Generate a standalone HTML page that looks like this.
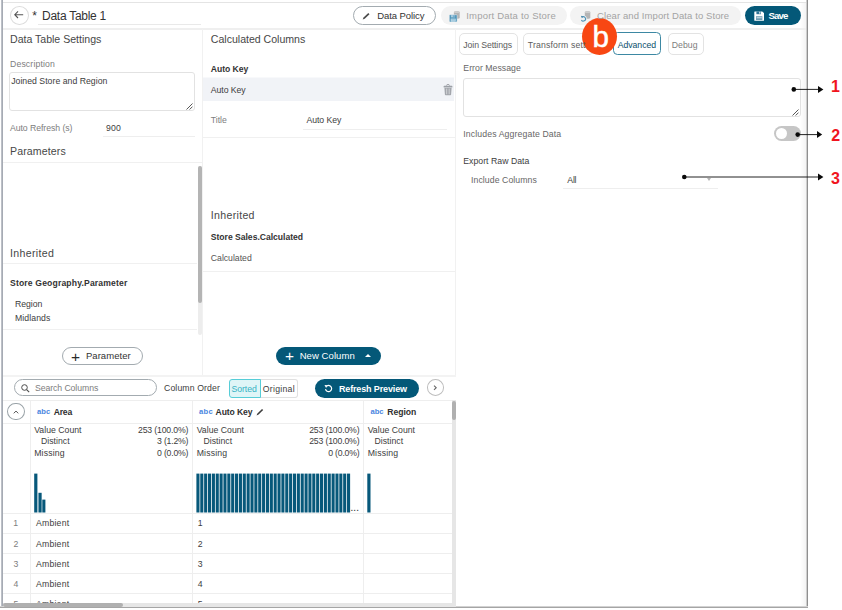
<!DOCTYPE html>
<html>
<head>
<meta charset="utf-8">
<title>Data Table 1</title>
<style>
html,body{margin:0;padding:0;background:#fff;}
body{width:842px;height:610px;position:relative;overflow:hidden;font-family:"Liberation Sans",sans-serif;color:#3c3c3c;}
.a{position:absolute;}
.t{position:absolute;white-space:nowrap;line-height:14px;height:14px;font-size:9px;color:#444;}
.ln{position:absolute;background:#eeeeee;}
.pill{position:absolute;border-radius:12px;box-sizing:border-box;}
.bx{position:absolute;box-sizing:border-box;border:1px solid #e3e3e3;border-radius:5px;background:#fff;}
</style>
</head>
<body>
<!-- outer frame -->
<div class="a" style="left:3px;top:2px;width:804px;height:1px;background:#e4e4e4;"></div>
<div class="a" style="left:1px;top:0;width:1px;height:608px;background:#bcc0c7;"></div><div class="a" style="left:2px;top:0;width:1px;height:608px;background:#a6abb4;"></div>
<div class="a" style="left:800px;top:3px;width:6px;height:603px;background:linear-gradient(90deg,#ffffff,#f3f3f3);"></div><div class="a" style="left:806px;top:0;width:1px;height:608px;background:#cdcdcd;"></div><div class="a" style="left:807px;top:0;width:1px;height:608px;background:#8e8e8e;"></div>
<div class="a" style="left:0;top:606px;width:808px;height:1px;background:#d2d2d2;"></div><div class="a" style="left:0;top:607px;width:808px;height:1px;background:#a5a5a5;"></div>

<!-- header -->
<div class="a" style="left:10px;top:5.8px;width:18.6px;height:18.8px;border:1px solid #dcdcdc;border-radius:50%;box-sizing:border-box;"></div>
<svg class="a" style="left:13px;top:9px;" width="12" height="12" viewBox="0 0 12 12"><path d="M10.2 5.7H2.2M5 2.4L1.8 5.7 5 9" fill="none" stroke="#555" stroke-width="1.1"/></svg>
<div class="ln" style="left:38px;top:24px;width:163px;height:1px;background:#e9e9e9;"></div>
<div class="ln" style="left:3px;top:28px;width:803px;height:2px;background:#efefef;"></div>

<div class="pill" style="left:353px;top:6px;width:83px;height:19px;border:1.3px solid #a3abb0;background:#fff;"></div>
<svg class="a" style="left:362px;top:12px;" width="9" height="8" viewBox="0 0 9 8"><path d="M0.7 7.5l0.8-2L6.3 1.1l1.2 1.2L2.7 6.7z" fill="#4a4a4a"/></svg>

<div class="pill" style="left:440.5px;top:6px;width:126px;height:19px;background:#f3f3f3;"></div>
<svg class="a" style="left:449px;top:11px;" width="11" height="11" viewBox="0 0 11 11">
 <path d="M4.9 1.1c0-1.1 5.8-1.1 5.8 0v5.8c0 1.1-5.8 1.1-5.8 0z" fill="#b4b4b4"/><ellipse cx="7.8" cy="1.2" rx="2.9" ry="0.9" fill="#cdcdcd"/>
 <rect x="0.3" y="3.7" width="7.8" height="7.3" rx="0.9" fill="#4c93b8" stroke="#f3f3f3" stroke-width="0.5"/><rect x="1.9" y="4.1" width="4.2" height="2.3" fill="#a8cde0"/><rect x="4.5" y="4.4" width="1" height="1.6" fill="#4c93b8"/><rect x="1.7" y="7.6" width="5" height="3.1" fill="#c5dfeb"/><rect x="2.3" y="8.6" width="3.8" height="0.7" fill="#6aa6c6"/>
</svg>

<div class="pill" style="left:570px;top:6px;width:171px;height:19px;background:#f3f3f3;"></div>
<svg class="a" style="left:580px;top:11px;" width="11" height="11" viewBox="0 0 11 11">
 <path d="M4.8 1.1c0-1.1 5.5-1.1 5.5 0v5.8c0 1.1-5.5 1.1-5.5 0z" fill="#b4b4b4"/><ellipse cx="7.55" cy="1.2" rx="2.75" ry="0.9" fill="#cdcdcd"/>
 <circle cx="3.4" cy="7.8" r="3.3" fill="#f1f1f1"/>
 <path d="M2.4 5.9A2.2 2.2 0 1 1 1.4 8.9" fill="none" stroke="#4c93b8" stroke-width="1.1"/><path d="M0.9 4.7l2.5 0.7-1.5 1.8z" fill="#3b7fa4"/>
</svg>

<div class="pill" style="left:745px;top:5.5px;width:56px;height:19.5px;background:#045878;"></div>
<svg class="a" style="left:753.5px;top:10.5px;" width="10.5" height="10" viewBox="0 0 10.5 10">
 <path d="M0.8 0.4h7.4l1.9 1.7v7.1a0.5 0.5 0 0 1-0.5 0.5H0.8a0.5 0.5 0 0 1-0.5-0.5V0.9a0.5 0.5 0 0 1 0.5-0.5z" fill="#fff"/>
 <rect x="2.4" y="0.4" width="4.6" height="2.8" fill="#2d7396"/><rect x="5.3" y="0.8" width="1.1" height="1.9" fill="#fff"/>
 <rect x="2" y="5.2" width="6.4" height="3.8" fill="#6f9db3"/><rect x="2.6" y="6.4" width="5.2" height="0.8" fill="#eaf2f6"/>
</svg>

<!-- left panel -->
<div class="a" style="left:9px;top:72px;width:186px;height:39px;border:1px solid #e2e2e2;border-radius:3px;box-sizing:border-box;"></div>
<svg class="a" style="left:186px;top:103px;" width="7" height="7" viewBox="0 0 7 7"><path d="M0.5 6.5L6.5 0.5M3.6 6.5L6.5 3.6" stroke="#444" stroke-width="0.9" fill="none"/></svg>
<div class="ln" style="left:103px;top:136px;width:92px;height:1px;"></div>
<div class="ln" style="left:3px;top:162px;width:199px;height:1px;background:#f0f0f0;"></div>
<div class="ln" style="left:3px;top:263px;width:194px;height:1px;background:#f0f0f0;"></div>
<div class="ln" style="left:3px;top:329px;width:194px;height:1px;background:#f0f0f0;"></div>
<div class="a" style="left:197.5px;top:166px;width:4.5px;height:169px;background:#ededed;border-radius:3px;"></div>
<div class="a" style="left:197.5px;top:166px;width:4.5px;height:136.5px;background:#b4b4b4;border-radius:3px;"></div>
<div class="pill" style="left:62px;top:347px;width:81px;height:17.6px;border:1.3px solid #a3abb0;background:#fff;"></div>
<div class="ln" style="left:202px;top:29px;width:1px;height:347px;background:#f1f1f1;"></div>

<!-- middle panel -->
<div class="a" style="left:203px;top:77px;width:251px;height:1px;background:#f8f9fb;"></div><div class="a" style="left:203px;top:78px;width:251px;height:23px;background:#f1f3f7;"></div>
<svg class="a" style="left:443px;top:84px;" width="10" height="12" viewBox="0 0 10 12">
 <path d="M3.4 1.6c0-1.6 3.2-1.6 3.2 0" fill="none" stroke="#a3a6ac" stroke-width="1"/>
 <rect x="0.6" y="1.8" width="8.8" height="1.7" rx="0.6" fill="#9ca0a6"/>
 <path d="M1.4 3.9h7.2l-0.5 6.6a0.8 0.8 0 0 1-0.8 0.7H2.7a0.8 0.8 0 0 1-0.8-0.7z" fill="#a3a6ac"/>
 <rect x="3" y="4.6" width="1.2" height="5.6" fill="#c9cbcf"/><rect x="5.6" y="4.6" width="1.2" height="5.6" fill="#c9cbcf"/>
</svg>
<div class="ln" style="left:302.5px;top:128.5px;width:144px;height:1px;"></div>
<div class="ln" style="left:203px;top:137px;width:252px;height:1px;background:#f0f0f0;"></div>
<div class="ln" style="left:203px;top:271px;width:252px;height:1px;background:#f0f0f0;"></div>
<div class="pill" style="left:275.5px;top:347px;width:105.5px;height:17.5px;background:#045878;"></div>
<div class="a" style="left:365px;top:354.3px;width:0;height:0;border-left:3px solid transparent;border-right:3px solid transparent;border-bottom:3.6px solid #fff;"></div>
<div class="ln" style="left:455px;top:29px;width:1px;height:347px;background:#f1f1f1;"></div>

<!-- right panel -->
<div class="bx" style="left:459px;top:32.5px;width:58.5px;height:22.5px;"></div>
<div class="bx" style="left:523px;top:32.5px;width:71px;height:22.5px;"></div>
<div class="bx" style="left:612.5px;top:32px;width:48.5px;height:23.4px;border:1.3px solid #3d88a3;border-radius:4.5px;"></div>
<div class="bx" style="left:667.5px;top:32.5px;width:36px;height:22.5px;"></div>
<div class="a" style="left:582.2px;top:17.6px;width:35px;height:37px;border-radius:50%;background:#f84713;"></div>
<div class="t" style="left:592.6px;top:21.1px;font-size:29.6px;line-height:32px;height:32px;color:#fff;-webkit-text-stroke:0.5px #fff;">b</div>

<div class="a" style="left:463px;top:78px;width:338px;height:38.5px;border:1px solid #e2e2e2;border-radius:3px;box-sizing:border-box;"></div>
<svg class="a" style="left:792px;top:108.5px;" width="7" height="7" viewBox="0 0 7 7"><path d="M0.5 6.5L6.5 0.5M3.6 6.5L6.5 3.6" stroke="#444" stroke-width="0.9" fill="none"/></svg>
<div class="a" style="left:774px;top:125.5px;width:26.5px;height:15.4px;border-radius:8px;background:#c6c6c6;"></div>
<div class="a" style="left:775.7px;top:127.5px;width:11.4px;height:11.4px;border-radius:6px;background:#fff;"></div>
<div class="ln" style="left:563px;top:188px;width:154.5px;height:1px;"></div>
<div class="a" style="left:707.2px;top:177.6px;width:0;height:0;border-left:2.7px solid transparent;border-right:2.7px solid transparent;border-top:3.2px solid #b5b5b5;"></div>

<!-- annotations -->
<svg class="a" style="left:670px;top:70px;" width="172" height="130" viewBox="0 0 172 130">
 <g stroke="#0a0a0a" stroke-width="0.9" fill="#0a0a0a">
  <circle cx="123.8" cy="19.4" r="2.3" stroke="none"/><line x1="123.8" y1="19.4" x2="149" y2="19.4"/><path d="M153.4 19.4l-5.4 -3.5v7z" stroke="none"/>
  <circle cx="127.7" cy="64.6" r="2.3" stroke="none"/><line x1="127.7" y1="64.6" x2="148" y2="64.6"/><path d="M152.2 64.6l-5.2 -3.5v7z" stroke="none"/>
  <circle cx="14.3" cy="107" r="2.3" stroke="none"/><line x1="14.3" y1="107" x2="149" y2="107"/><path d="M153.4 107l-5.4 -3.5v7z" stroke="none"/>
 </g>
 <g font-family="Liberation Sans, sans-serif" font-weight="bold" font-size="16" fill="#f0141e">
  <text x="161.1" y="21.9">1</text><text x="161.3" y="71.1">2</text><text x="161" y="114.2">3</text>
 </g>
</svg>

<!-- bottom panel -->
<div class="ln" style="left:3px;top:375px;width:453px;height:2px;background:#f3f3f3;"></div>
<div class="pill" style="left:14px;top:379px;width:142.5px;height:16.8px;border:1.3px solid #a3abb0;background:#fff;"></div>
<svg class="a" style="left:21px;top:384px;" width="9" height="9" viewBox="0 0 9 9"><circle cx="3.5" cy="3.5" r="2.8" fill="none" stroke="#4a4a4a" stroke-width="1"/><path d="M5.6 5.6L8.2 8.2" stroke="#4a4a4a" stroke-width="1.1"/></svg>
<div class="a" style="left:260px;top:378.5px;width:37.5px;height:19px;border:1px solid #e0e0e0;border-left:none;border-radius:0 3px 3px 0;box-sizing:border-box;"></div>
<div class="a" style="left:228.5px;top:378.5px;width:32px;height:19px;border:1.3px solid #57cdd7;background:#dff5f7;border-radius:3px 0 0 3px;box-sizing:border-box;"></div>
<div class="pill" style="left:314.5px;top:378.5px;width:104.8px;height:19px;background:#045878;"></div>
<svg class="a" style="left:323.8px;top:383.7px;" width="9" height="9" viewBox="0 0 9 9"><path d="M2.9 1.9A3.1 3.1 0 1 1 1.5 5.2" fill="none" stroke="#fff" stroke-width="1.2"/><path d="M0.5 1.1l3.2 0.2-1.6 2.6z" fill="#fff"/></svg>
<div class="a" style="left:426.7px;top:379.2px;width:16.9px;height:16.7px;border:1px solid #bdbdbd;border-radius:50%;box-sizing:border-box;"></div>
<svg class="a" style="left:432.3px;top:383.8px;" width="6" height="8" viewBox="0 0 6 8"><path d="M2 1.6L4.2 3.7 2 5.8" fill="none" stroke="#666" stroke-width="1.1"/></svg>

<!-- table -->
<div class="ln" style="left:3px;top:400px;width:449px;height:1px;"></div>
<div class="ln" style="left:3px;top:423px;width:449px;height:1px;"></div>
<div class="a" style="left:7.4px;top:402.9px;width:17.2px;height:17.5px;border:1px solid #9aa3a8;border-radius:50%;box-sizing:border-box;"></div>
<svg class="a" style="left:12px;top:408.5px;" width="8" height="6" viewBox="0 0 8 6"><path d="M1.7 4.3L4 2.1l2.3 2.2" fill="none" stroke="#5a5a5a" stroke-width="1"/></svg>
<div class="ln" style="left:29.5px;top:400px;width:1px;height:204px;"></div>
<div class="ln" style="left:192px;top:400px;width:1px;height:204px;"></div>
<div class="ln" style="left:363px;top:400px;width:1px;height:204px;"></div>
<svg class="a" style="left:256px;top:407.5px;" width="8" height="8" viewBox="0 0 8 8"><path d="M0.5 7.5l0.9-2.1L6 0.9l1.2 1.2L2.6 6.6z" fill="#3d3d3d"/></svg>

<!-- histograms -->
<svg class="a" style="left:0;top:470px;" width="460" height="45" viewBox="0 0 460 45"><g fill="#07587a"><rect x="34.20" y="3.60" width="3.20" height="38.90"/><rect x="38.45" y="22.80" width="3.20" height="19.70"/><rect x="42.30" y="29.60" width="3.10" height="12.90"/><rect x="196.40" y="3.60" width="3.09" height="38.90"/><rect x="200.26" y="3.60" width="3.09" height="38.90"/><rect x="204.12" y="3.60" width="3.09" height="38.90"/><rect x="207.99" y="3.60" width="3.09" height="38.90"/><rect x="211.85" y="3.60" width="3.09" height="38.90"/><rect x="215.71" y="3.60" width="3.09" height="38.90"/><rect x="219.57" y="3.60" width="3.09" height="38.90"/><rect x="223.43" y="3.60" width="3.09" height="38.90"/><rect x="227.30" y="3.60" width="3.09" height="38.90"/><rect x="231.16" y="3.60" width="3.09" height="38.90"/><rect x="235.02" y="3.60" width="3.09" height="38.90"/><rect x="238.88" y="3.60" width="3.09" height="38.90"/><rect x="242.74" y="3.60" width="3.09" height="38.90"/><rect x="246.61" y="3.60" width="3.09" height="38.90"/><rect x="250.47" y="3.60" width="3.09" height="38.90"/><rect x="254.33" y="3.60" width="3.09" height="38.90"/><rect x="258.19" y="3.60" width="3.09" height="38.90"/><rect x="262.05" y="3.60" width="3.09" height="38.90"/><rect x="265.92" y="3.60" width="3.09" height="38.90"/><rect x="269.78" y="3.60" width="3.09" height="38.90"/><rect x="273.64" y="3.60" width="3.09" height="38.90"/><rect x="277.50" y="3.60" width="3.09" height="38.90"/><rect x="281.36" y="3.60" width="3.09" height="38.90"/><rect x="285.23" y="3.60" width="3.09" height="38.90"/><rect x="289.09" y="3.60" width="3.09" height="38.90"/><rect x="292.95" y="3.60" width="3.09" height="38.90"/><rect x="296.81" y="3.60" width="3.09" height="38.90"/><rect x="300.67" y="3.60" width="3.09" height="38.90"/><rect x="304.54" y="3.60" width="3.09" height="38.90"/><rect x="308.40" y="3.60" width="3.09" height="38.90"/><rect x="312.26" y="3.60" width="3.09" height="38.90"/><rect x="316.12" y="3.60" width="3.09" height="38.90"/><rect x="319.98" y="3.60" width="3.09" height="38.90"/><rect x="323.85" y="3.60" width="3.09" height="38.90"/><rect x="327.71" y="3.60" width="3.09" height="38.90"/><rect x="331.57" y="3.60" width="3.09" height="38.90"/><rect x="335.43" y="3.60" width="3.09" height="38.90"/><rect x="339.29" y="3.60" width="3.09" height="38.90"/><rect x="343.16" y="3.60" width="3.09" height="38.90"/><rect x="347.02" y="3.60" width="3.09" height="38.90"/><rect x="367.30" y="3.60" width="3.20" height="38.90"/></g></svg>

<!-- rows -->
<div class="ln" style="left:3px;top:513px;width:449px;height:1px;"></div>
<div class="ln" style="left:3px;top:532.5px;width:449px;height:1px;"></div>
<div class="ln" style="left:3px;top:552.5px;width:449px;height:1px;"></div>
<div class="ln" style="left:3px;top:572.5px;width:449px;height:1px;"></div>
<div class="ln" style="left:3px;top:593px;width:449px;height:1px;"></div>
<div class="t" style="left:32.25px;top:8.84px;font-size:12.0px;color:#333;letter-spacing:0px;">*</div>
<div class="t" style="left:42.00px;top:8.64px;font-size:12.0px;color:#333;letter-spacing:-0.264px;">Data Table 1</div>
<div class="t" style="left:377.20px;top:8.91px;font-size:9.5px;color:#333;letter-spacing:-0.07px;">Data Policy</div>
<div class="t" style="left:466.20px;top:8.91px;font-size:9.5px;color:#a3a3a3;letter-spacing:0.208px;">Import Data to Store</div>
<div class="t" style="left:597.00px;top:8.91px;font-size:9.5px;color:#a3a3a3;letter-spacing:0.094px;">Clear and Import Data to Store</div>
<div class="t" style="left:768.60px;top:8.64px;font-size:9.7px;color:#fff;letter-spacing:-0.979px;font-weight:bold;">Save</div>
<div class="t" style="left:10.00px;top:32.33px;font-size:10.6px;color:#474747;letter-spacing:-0.021px;">Data Table Settings</div>
<div class="t" style="left:10.00px;top:56.59px;font-size:8.7px;color:#7d7d7d;letter-spacing:0.138px;">Description</div>
<div class="t" style="left:11.20px;top:74.29px;font-size:8.7px;color:#3d3d3d;letter-spacing:0.023px;">Joined Store and Region</div>
<div class="t" style="left:10.00px;top:121.19px;font-size:8.7px;color:#7d7d7d;letter-spacing:-0.057px;">Auto Refresh (s)</div>
<div class="t" style="left:106.00px;top:121.19px;font-size:8.7px;color:#3d3d3d;letter-spacing:0.168px;">900</div>
<div class="t" style="left:10.00px;top:143.83px;font-size:10.6px;color:#474747;letter-spacing:0.116px;">Parameters</div>
<div class="t" style="left:10.00px;top:246.03px;font-size:10.6px;color:#474747;letter-spacing:0.333px;">Inherited</div>
<div class="t" style="left:10.00px;top:276.22px;font-size:8.6px;color:#333;letter-spacing:0.16px;font-weight:bold;">Store Geography.Parameter</div>
<div class="t" style="left:15.00px;top:296.99px;font-size:8.7px;color:#3d3d3d;letter-spacing:-0.04px;">Region</div>
<div class="t" style="left:15.00px;top:310.69px;font-size:8.7px;color:#3d3d3d;letter-spacing:0.082px;">Midlands</div>
<div class="t" style="left:70.90px;top:349.53px;font-size:15.5px;color:#2a2a2a;letter-spacing:0px;">+</div>
<div class="t" style="left:85.90px;top:349.31px;font-size:9.5px;color:#333;letter-spacing:0.064px;">Parameter</div>
<div class="t" style="left:210.80px;top:31.93px;font-size:10.6px;color:#474747;letter-spacing:-0.018px;">Calculated Columns</div>
<div class="t" style="left:210.80px;top:62.22px;font-size:8.6px;color:#333;letter-spacing:-0.034px;font-weight:bold;">Auto Key</div>
<div class="t" style="left:210.80px;top:82.99px;font-size:8.7px;color:#3d3d3d;letter-spacing:-0.059px;">Auto Key</div>
<div class="t" style="left:210.80px;top:112.79px;font-size:8.7px;color:#7d7d7d;letter-spacing:-0.014px;">Title</div>
<div class="t" style="left:306.50px;top:112.79px;font-size:8.7px;color:#3d3d3d;letter-spacing:-0.059px;">Auto Key</div>
<div class="t" style="left:210.80px;top:207.53px;font-size:10.6px;color:#474747;letter-spacing:0.308px;">Inherited</div>
<div class="t" style="left:210.80px;top:229.82px;font-size:8.6px;color:#333;letter-spacing:-0.02px;font-weight:bold;">Store Sales.Calculated</div>
<div class="t" style="left:210.80px;top:250.69px;font-size:8.7px;color:#555;letter-spacing:-0.013px;">Calculated</div>
<div class="t" style="left:285.00px;top:349.43px;font-size:15.5px;color:#fff;letter-spacing:0px;">+</div>
<div class="t" style="left:299.70px;top:349.11px;font-size:9.5px;color:#fff;letter-spacing:0.067px;">New Column</div>
<div class="t" style="left:463.30px;top:37.59px;font-size:8.7px;color:#5c5c5c;letter-spacing:-0.083px;">Join Settings</div>
<div class="t" style="left:527.80px;top:37.59px;font-size:8.7px;color:#5c5c5c;letter-spacing:0.149px;">Transform sett</div>
<div class="t" style="left:617.70px;top:37.59px;font-size:8.7px;color:#0b4f6c;letter-spacing:-0.03px;">Advanced</div>
<div class="t" style="left:671.70px;top:37.59px;font-size:8.7px;color:#7d7d7d;letter-spacing:0.058px;">Debug</div>
<div class="t" style="left:463.30px;top:60.89px;font-size:8.7px;color:#666;letter-spacing:0.047px;">Error Message</div>
<div class="t" style="left:463.30px;top:126.89px;font-size:8.7px;color:#666;letter-spacing:0.123px;">Includes Aggregate Data</div>
<div class="t" style="left:463.30px;top:153.69px;font-size:8.7px;color:#3d3d3d;letter-spacing:0.026px;">Export Raw Data</div>
<div class="t" style="left:471.00px;top:172.59px;font-size:8.7px;color:#666;letter-spacing:0.081px;">Include Columns</div>
<div class="t" style="left:567.30px;top:172.59px;font-size:8.7px;color:#3d3d3d;letter-spacing:-0.212px;">All</div>
<div class="t" style="left:35.00px;top:380.99px;font-size:8.7px;color:#7d7d7d;letter-spacing:-0.075px;">Search Columns</div>
<div class="t" style="left:164.00px;top:380.99px;font-size:8.7px;color:#3d3d3d;letter-spacing:0.122px;">Column Order</div>
<div class="t" style="left:231.40px;top:381.69px;font-size:8.7px;color:#35b3c4;letter-spacing:-0.033px;">Sorted</div>
<div class="t" style="left:262.80px;top:381.69px;font-size:8.7px;color:#3d3d3d;letter-spacing:0.271px;">Original</div>
<div class="t" style="left:338.90px;top:381.88px;font-size:9.0px;color:#fff;letter-spacing:-0.131px;font-weight:bold;">Refresh Preview</div>
<div class="t" style="left:36.90px;top:404.77px;font-size:7.6px;color:#4a86e0;letter-spacing:0.119px;font-weight:bold;">abc</div>
<div class="t" style="left:53.80px;top:404.62px;font-size:8.6px;color:#2f2f2f;letter-spacing:-0.243px;font-weight:bold;">Area</div>
<div class="t" style="left:199.10px;top:404.77px;font-size:7.6px;color:#4a86e0;letter-spacing:0.219px;font-weight:bold;">abc</div>
<div class="t" style="left:215.60px;top:404.62px;font-size:8.6px;color:#2f2f2f;letter-spacing:-0.12px;font-weight:bold;">Auto Key</div>
<div class="t" style="left:370.50px;top:404.77px;font-size:7.6px;color:#4a86e0;letter-spacing:-0.031px;font-weight:bold;">abc</div>
<div class="t" style="left:387.30px;top:404.62px;font-size:8.6px;color:#2f2f2f;letter-spacing:-0.014px;font-weight:bold;">Region</div>
<div class="t" style="left:34.20px;top:422.59px;font-size:8.7px;color:#3d3d3d;letter-spacing:0.014px;">Value Count</div>
<div class="t" style="left:41.00px;top:434.49px;font-size:8.7px;color:#3d3d3d;letter-spacing:0.019px;">Distinct</div>
<div class="t" style="left:34.20px;top:445.59px;font-size:8.7px;color:#3d3d3d;letter-spacing:0.164px;">Missing</div>
<div class="t" style="left:196.70px;top:422.59px;font-size:8.7px;color:#3d3d3d;letter-spacing:0.014px;">Value Count</div>
<div class="t" style="left:203.50px;top:434.49px;font-size:8.7px;color:#3d3d3d;letter-spacing:0.019px;">Distinct</div>
<div class="t" style="left:196.70px;top:445.59px;font-size:8.7px;color:#3d3d3d;letter-spacing:0.164px;">Missing</div>
<div class="t" style="left:367.70px;top:422.59px;font-size:8.7px;color:#3d3d3d;letter-spacing:0.014px;">Value Count</div>
<div class="t" style="left:374.50px;top:434.49px;font-size:8.7px;color:#3d3d3d;letter-spacing:0.019px;">Distinct</div>
<div class="t" style="left:367.70px;top:445.59px;font-size:8.7px;color:#3d3d3d;letter-spacing:0.164px;">Missing</div>
<div class="t" style="left:138.00px;top:422.59px;font-size:8.7px;color:#3d3d3d;letter-spacing:-0.161px;">253 (100.0%)</div>
<div class="t" style="left:157.10px;top:434.19px;font-size:8.7px;color:#3d3d3d;letter-spacing:-0.22px;">3 (1.2%)</div>
<div class="t" style="left:157.10px;top:445.59px;font-size:8.7px;color:#3d3d3d;letter-spacing:-0.22px;">0 (0.0%)</div>
<div class="t" style="left:309.20px;top:422.59px;font-size:8.7px;color:#3d3d3d;letter-spacing:-0.161px;">253 (100.0%)</div>
<div class="t" style="left:309.20px;top:434.19px;font-size:8.7px;color:#3d3d3d;letter-spacing:-0.161px;">253 (100.0%)</div>
<div class="t" style="left:328.30px;top:445.59px;font-size:8.7px;color:#3d3d3d;letter-spacing:-0.22px;">0 (0.0%)</div>
<div class="t" style="left:350.20px;top:500.22px;font-size:11.5px;color:#444;letter-spacing:-0.345px;">...</div>
<div class="t" style="left:13.25px;top:516.49px;font-size:8.7px;color:#7d7d7d;letter-spacing:0px;">1</div>
<div class="t" style="left:36.00px;top:516.49px;font-size:8.7px;color:#3d3d3d;letter-spacing:0.207px;">Ambient</div>
<div class="t" style="left:197.65px;top:516.49px;font-size:8.7px;color:#3d3d3d;letter-spacing:0px;">1</div>
<div class="t" style="left:13.40px;top:536.79px;font-size:8.7px;color:#7d7d7d;letter-spacing:0px;">2</div>
<div class="t" style="left:36.00px;top:536.79px;font-size:8.7px;color:#3d3d3d;letter-spacing:0.207px;">Ambient</div>
<div class="t" style="left:197.80px;top:536.79px;font-size:8.7px;color:#3d3d3d;letter-spacing:0px;">2</div>
<div class="t" style="left:13.40px;top:556.69px;font-size:8.7px;color:#7d7d7d;letter-spacing:0px;">3</div>
<div class="t" style="left:36.00px;top:556.69px;font-size:8.7px;color:#3d3d3d;letter-spacing:0.207px;">Ambient</div>
<div class="t" style="left:197.80px;top:556.69px;font-size:8.7px;color:#3d3d3d;letter-spacing:0px;">3</div>
<div class="t" style="left:13.40px;top:576.99px;font-size:8.7px;color:#7d7d7d;letter-spacing:0px;">4</div>
<div class="t" style="left:36.00px;top:576.99px;font-size:8.7px;color:#3d3d3d;letter-spacing:0.207px;">Ambient</div>
<div class="t" style="left:197.80px;top:576.99px;font-size:8.7px;color:#3d3d3d;letter-spacing:0px;">4</div>
<div class="t" style="left:13.40px;top:596.99px;font-size:8.7px;color:#7d7d7d;letter-spacing:0px;">5</div>
<div class="t" style="left:36.00px;top:596.99px;font-size:8.7px;color:#3d3d3d;letter-spacing:0.207px;">Ambient</div>
<div class="t" style="left:197.80px;top:596.99px;font-size:8.7px;color:#3d3d3d;letter-spacing:0px;">5</div>
<!-- scrollbars -->
<div class="a" style="left:451.5px;top:400px;width:4.5px;height:207px;background:#e6e6e6;"></div>
<div class="a" style="left:451.5px;top:400.8px;width:4.5px;height:19px;background:#b0b0b0;border-radius:3px;"></div>
<div class="a" style="left:3px;top:602.5px;width:449px;height:4.5px;background:#e6e6e6;"></div>
<div class="a" style="left:3px;top:602.5px;width:120px;height:4.5px;background:#b0b0b0;border-radius:2px;"></div>
</body>
</html>
